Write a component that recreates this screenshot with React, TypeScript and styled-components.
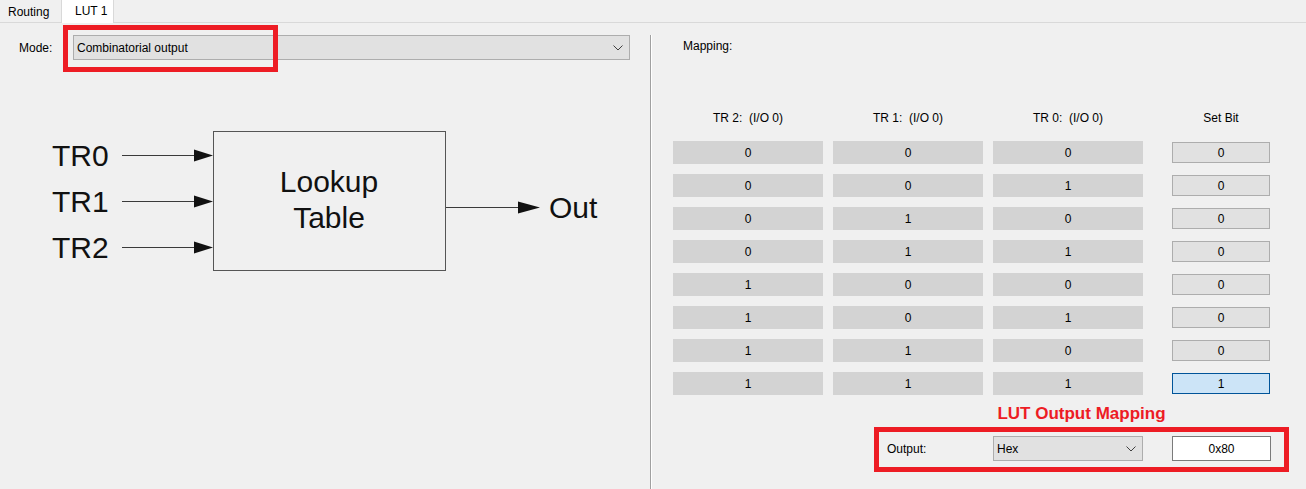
import React from "react";
import styled, { createGlobalStyle, css } from "styled-components";

const GlobalStyle = createGlobalStyle`
  html, body, #root { height: 100%; }
  body {
    margin: 0;
    background: #f0f0f0;
    font-family: "Liberation Sans", Arial, sans-serif;
    font-size: 12px;
    color: #000;
    overflow: hidden;
  }
  * { box-sizing: border-box; }
`;

const Page = styled.div`
  display: flex;
  flex-direction: column;
  height: 100%;
`;

const TabBar = styled.div`
  display: flex;
  align-items: flex-end;
  height: 23px;
  border-bottom: 1px solid #d9d9d9;
  background: #f0f0f0;
`;

const Tab = styled.div<{ $active?: boolean }>`
  height: 21px;
  width: 61px;
  padding-left: 8px;
  padding-top: 1px;
  display: flex;
  align-items: center;
  ${(p) =>
    p.$active &&
    css`
      height: 24px;
      width: 53px;
      padding-left: 13px;
      padding-top: 0;
      padding-bottom: 2px;
      margin-bottom: -1px;
      background: #ffffff;
      border: 1px solid #d9d9d9;
      border-bottom: none;
    `}
`;

const Body = styled.div`
  flex: 1;
  display: flex;
  min-height: 0;
`;

const LeftPanel = styled.div`
  width: 650px;
  padding: 12px 20px 0 19px;
  display: flex;
  flex-direction: column;
`;

const ModeRow = styled.div`
  position: relative;
  display: flex;
  align-items: center;
  height: 25px;
`;

const FieldLabel = styled.div<{ $w: number }>`
  width: ${(p) => p.$w}px;
  flex-shrink: 0;
`;

const Select = styled.div<{ $w?: number }>`
  ${(p) => (p.$w ? `width: ${p.$w}px;` : "flex: 1;")}
  height: 100%;
  background: #e1e1e1;
  border: 1px solid #adadad;
  display: flex;
  align-items: center;
  justify-content: space-between;
  padding: 0 6px 0 3px;
`;

const Chevron = () => (
  <svg width="10" height="6" viewBox="0 0 10 6">
    <polyline points="0.5,0.5 5,5 9.5,0.5" fill="none" stroke="#404040" strokeWidth="1" />
  </svg>
);

const Annotation = styled.div<{ $l: number; $t: number; $w: number; $h: number }>`
  position: absolute;
  left: ${(p) => p.$l}px;
  top: ${(p) => p.$t}px;
  width: ${(p) => p.$w}px;
  height: ${(p) => p.$h}px;
  border: 5px solid #ed1c24;
  pointer-events: none;
`;

const Diagram = styled.svg`
  display: block;
  margin-top: 50px;
  font-family: "Liberation Sans", Arial, sans-serif;
`;

const RightPanel = styled.div`
  flex: 1;
  margin-top: 12px;
  border-left: 1px solid #a0a0a0;
  box-shadow: inset 1px 0 0 #ffffff;
  padding: 4px 0 0 22px;
  display: flex;
  flex-direction: column;
`;

const MappingLabel = styled.div`
  margin-left: 10px;
  line-height: 15px;
`;

const Row = styled.div<{ $mt?: number }>`
  display: flex;
  gap: 10px;
  margin-top: ${(p) => p.$mt ?? 0}px;
`;

const Grid = styled.div`
  display: flex;
  flex-direction: column;
  gap: 10px;
  margin-top: 15px;
`;

const HeaderCell = styled.div<{ $set?: boolean }>`
  width: ${(p) => (p.$set ? 98 : 150)}px;
  margin-left: ${(p) => (p.$set ? 19 : 0)}px;
  text-align: center;
  line-height: 16px;
  white-space: pre;
`;

const Cell = styled.div`
  width: 150px;
  height: 23px;
  background: #d3d3d3;
  display: flex;
  align-items: center;
  justify-content: center;
`;

const SetBit = styled.div<{ $on?: boolean }>`
  width: 98px;
  height: 21px;
  align-self: center;
  margin-left: 19px;
  background: ${(p) => (p.$on ? "#cce4f7" : "#e1e1e1")};
  border: 1px solid ${(p) => (p.$on ? "#005499" : "#adadad")};
  display: flex;
  align-items: center;
  justify-content: center;
`;

const OutputSection = styled.div`
  margin-left: 201px;
  width: 415px;
  margin-top: 9px;
`;

const OutputTitle = styled.div`
  text-align: center;
  color: #ed1c24;
  font-weight: bold;
  font-size: 17px;
  line-height: 20px;
`;

const OutputRow = styled.div`
  margin-top: 3px;
  border: 5px solid #ed1c24;
  padding: 4px 13px 6px 8px;
  height: 45px;
  display: flex;
  align-items: center;
`;

const ValueBox = styled.div`
  width: 99px;
  height: 25px;
  margin-left: 29px;
  background: #ffffff;
  border: 1px solid #7a7a7a;
  display: flex;
  align-items: center;
  justify-content: center;
`;

const rows = Array.from({ length: 8 }, (_, i) => ({
  tr2: (i >> 2) & 1,
  tr1: (i >> 1) & 1,
  tr0: i & 1,
  set: i === 7 ? 1 : 0,
}));

const LINE = "#3a3a3a";

export default function App() {
  return (
    <>
      <GlobalStyle />
      <Page>
        <TabBar>
          <Tab>Routing</Tab>
          <Tab $active>LUT 1</Tab>
        </TabBar>
        <Body>
          <LeftPanel>
            <ModeRow>
              <FieldLabel $w={54}>Mode:</FieldLabel>
              <Select>
                <span>Combinatorial output</span>
                <Chevron />
              </Select>
              <Annotation $l={44} $t={-10} $w={215} $h={47} />
            </ModeRow>
            <Diagram width="600" height="180" viewBox="0 0 600 180">
              <g fill="#111" fontSize="30">
                <text x="33" y="56">TR0</text>
                <text x="33" y="102">TR1</text>
                <text x="33" y="148">TR2</text>
                <text x="310" y="82" textAnchor="middle">Lookup</text>
                <text x="310" y="118" textAnchor="middle">Table</text>
                <text x="530" y="108">Out</text>
              </g>
              <g stroke={LINE} strokeWidth="1">
                <line x1="103" y1="45.5" x2="178" y2="45.5" />
                <line x1="103" y1="91.5" x2="178" y2="91.5" />
                <line x1="103" y1="137.5" x2="178" y2="137.5" />
                <line x1="426" y1="97.5" x2="502" y2="97.5" />
              </g>
              <g fill="#111">
                <polygon points="175,39.5 194,45.5 175,51.5" />
                <polygon points="175,85.5 194,91.5 175,97.5" />
                <polygon points="175,131.5 194,137.5 175,143.5" />
                <polygon points="499,91.5 521,97.5 499,103.5" />
              </g>
              <rect x="194.5" y="21.5" width="232" height="139" fill="none" stroke="#555" strokeWidth="1" />
            </Diagram>
          </LeftPanel>
          <RightPanel>
            <MappingLabel>Mapping:</MappingLabel>
            <Row $mt={56}>
              <HeaderCell>{"TR 2:  (I/O 0)"}</HeaderCell>
              <HeaderCell>{"TR 1:  (I/O 0)"}</HeaderCell>
              <HeaderCell>{"TR 0:  (I/O 0)"}</HeaderCell>
              <HeaderCell $set>Set Bit</HeaderCell>
            </Row>
            <Grid>
              {rows.map((r, i) => (
                <Row key={i}>
                  <Cell>{r.tr2}</Cell>
                  <Cell>{r.tr1}</Cell>
                  <Cell>{r.tr0}</Cell>
                  <SetBit $on={r.set === 1}>{r.set}</SetBit>
                </Row>
              ))}
            </Grid>
            <OutputSection>
              <OutputTitle>LUT Output Mapping</OutputTitle>
              <OutputRow>
                <FieldLabel $w={106}>Output:</FieldLabel>
                <Select $w={150}>
                  <span>Hex</span>
                  <Chevron />
                </Select>
                <ValueBox>0x80</ValueBox>
              </OutputRow>
            </OutputSection>
          </RightPanel>
        </Body>
      </Page>
    </>
  );
}
